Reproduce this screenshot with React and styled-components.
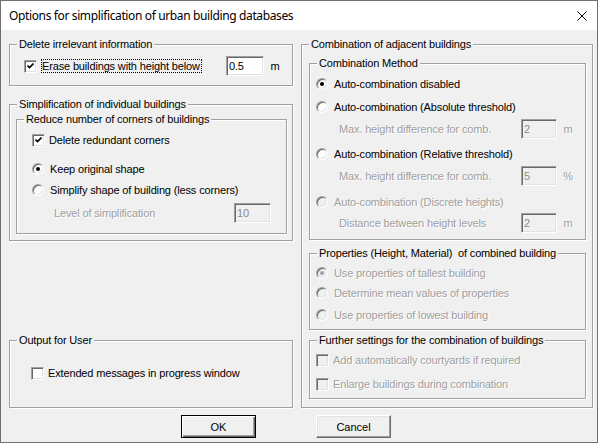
import React from "react";
import styled, { createGlobalStyle, css } from "styled-components";

const GlobalStyle = createGlobalStyle`
  html, body {
    margin: 0;
    padding: 0;
    background: #f0f0f0;
  }
  body {
    font-family: "Liberation Sans", Arial, sans-serif;
    font-size: 11px;
  }
`;

const Window = styled.div`
  width: 598px;
  height: 443px;
  box-sizing: border-box;
  border: 1px solid #6f6f6f;
  background: #f0f0f0;
  display: flex;
  flex-direction: column;
  font-family: "Liberation Sans", Arial, sans-serif;
  font-size: 11px;
  letter-spacing: -0.15px;
  color: #000;
`;

const TitleBar = styled.div`
  flex: none;
  height: 29px;
  background: #fff;
  display: flex;
  align-items: center;
  justify-content: space-between;
  padding: 0 10px 0 8px;
  font-family: "Noto Sans", "Segoe UI", sans-serif;
  font-size: 12px;
  letter-spacing: -0.37px;
`;

const CloseIcon = () => (
  <svg width="10" height="10" viewBox="0 0 10 10">
    <path d="M0.5 0.5 L9.5 9.5 M9.5 0.5 L0.5 9.5" stroke="#000" strokeWidth="1" />
  </svg>
);

const Body = styled.div`
  flex: 1;
  display: flex;
  flex-direction: column;
  padding: 14px 4px 4px 8px;
`;

const Columns = styled.div`
  display: grid;
  grid-template-columns: 284px 292px;
  column-gap: 8px;
  height: 364px;
`;

const Column = styled.div`
  display: flex;
  flex-direction: column;
`;

// etched group box, the caption sits over the top line
const Group = styled.div`
  display: flex;
  flex-direction: column;
  border: 1px solid #a0a0a0;
  box-shadow: inset 1px 1px 0 #fff, 1px 1px 0 #fff;
  margin-top: ${({ $mt }) => $mt || 0}px;
  ${({ $push }) =>
    $push &&
    css`
      margin-top: auto;
    `}
`;

const Legend = styled.div`
  align-self: flex-start;
  margin: -7px 0 0 7px;
  padding: 0 2px;
  height: 13px;
  line-height: 13px;
  background: #f0f0f0;
  white-space: nowrap;
`;

const GroupBody = styled.div`
  display: flex;
  flex-direction: column;
  padding: ${({ $pad }) => $pad};
`;

const Row = styled.div`
  display: flex;
  align-items: center;
  height: 20px;
  margin-top: ${({ $mt }) => $mt || 0}px;
  padding-left: ${({ $indent }) => $indent || 0}px;
  white-space: nowrap;
  color: ${({ $disabled }) => ($disabled ? "#a0a0a0" : "#000")};
  text-shadow: ${({ $disabled }) => ($disabled ? "1px 1px 0 #fff" : "none")};
`;

const Label = styled.span`
  flex: ${({ $grow }) => ($grow ? 1 : "none")};
`;

const FocusLabel = styled.span`
  height: 14px;
  box-sizing: border-box;
  line-height: 12px;
  border: 1px dotted #000;
  padding-right: 1px;
`;

const Spacer = styled.span`
  flex: 1;
`;

const sunken = css`
  box-sizing: border-box;
  border: 1px solid;
  border-color: #a0a0a0 #fff #fff #a0a0a0;
  box-shadow: inset 1px 1px 0 #696969, inset -1px -1px 0 #e3e3e3;
`;

const CheckBox = styled.span`
  ${sunken};
  flex: none;
  width: 13px;
  height: 13px;
  margin-right: 4px;
  display: flex;
  align-items: center;
  justify-content: center;
  background: ${({ $disabled }) => ($disabled ? "#f0f0f0" : "#fff")};
`;

const RadioButton = styled.span`
  ${sunken};
  flex: none;
  width: 12px;
  height: 12px;
  margin-right: 6px;
  border-radius: 50%;
  display: flex;
  align-items: center;
  justify-content: center;
  background: ${({ $disabled }) => ($disabled ? "#f0f0f0" : "#fff")};

  &::after {
    content: "";
    display: ${({ $checked }) => ($checked ? "block" : "none")};
    width: 4px;
    height: 4px;
    border-radius: 50%;
    background: ${({ $disabled }) => ($disabled ? "#a0a0a0" : "#000")};
  }
`;

const Field = styled.div`
  ${sunken};
  flex: none;
  width: ${({ $w }) => $w}px;
  height: 20px;
  padding: 0 2px;
  display: flex;
  align-items: center;
  background: ${({ $disabled }) => ($disabled ? "#f0f0f0" : "#fff")};
  color: ${({ $disabled }) => ($disabled ? "#8c8c8c" : "#000")};
  text-shadow: none;
`;

const Unit = styled.span`
  flex: none;
  width: 22px;
  text-align: center;
`;

const ButtonRow = styled.div`
  display: flex;
  gap: 60px;
  margin-top: 7px;
  padding-left: 172px;
`;

const Button = styled.button`
  width: 75px;
  height: 23px;
  box-sizing: border-box;
  padding: 0;
  font-family: inherit;
  font-size: 11px;
  color: #000;
  background: #f0f0f0;
  border: 1px solid;
  border-color: #fff #696969 #696969 #fff;
  box-shadow: inset -1px -1px 0 #a0a0a0, inset 1px 1px 0 #e3e3e3;

  ${({ $default }) =>
    $default &&
    css`
      border-color: #000;
      box-shadow: inset 1px 1px 0 #fff, inset -1px -1px 0 #696969,
        inset -2px -2px 0 #a0a0a0;
    `}
`;

const Check = ({ checked, disabled }) => (
  <CheckBox $disabled={disabled}>
    {checked && (
      <svg width="7" height="7" viewBox="0 0 7 7">
        <path d="M0.5 2.5 L2.5 4.5 L6.5 0.5" fill="none" stroke="#000" strokeWidth="1.6" />
      </svg>
    )}
  </CheckBox>
);

const Radio = ({ checked, disabled }) => (
  <RadioButton $checked={checked} $disabled={disabled} />
);

const ValueRow = ({ label, value, unit, mt, indent = 23, width = 36, disabled }) => (
  <Row $mt={mt} $indent={indent} $disabled={disabled}>
    <Label $grow>{label}</Label>
    <Field $w={width} $disabled>
      {value}
    </Field>
    {unit !== undefined && <Unit>{unit}</Unit>}
  </Row>
);

export default function App() {
  return (
    <>
      <GlobalStyle />
      <Window>
        <TitleBar>
          <span>Options for simplification of urban building databases</span>
          <CloseIcon />
        </TitleBar>
        <Body>
          <Columns>
            <Column>
              <Group>
                <Legend>Delete irrelevant information</Legend>
                <GroupBody $pad="5px 6px 9px 14px">
                  <Row>
                    <Check checked />
                    <FocusLabel>Erase buildings with height below</FocusLabel>
                    <Spacer />
                    <Field $w={38}>0.5</Field>
                    <Unit>m</Unit>
                  </Row>
                </GroupBody>
              </Group>

              <Group $mt={18}>
                <Legend>Simplification of individual buildings</Legend>
                <GroupBody $pad="8px 5px 6px 6px">
                  <Group>
                    <Legend>Reduce number of corners of buildings</Legend>
                    <GroupBody $pad="4px 15px 10px 15px">
                      <Row>
                        <Check checked />
                        <Label>Delete redundant corners</Label>
                      </Row>
                      <Row $mt={9}>
                        <Radio checked />
                        <Label>Keep original shape</Label>
                      </Row>
                      <Row $mt={1}>
                        <Radio />
                        <Label>Simplify shape of building (less corners)</Label>
                      </Row>
                      <ValueRow
                        mt={3}
                        indent={22}
                        width={37}
                        label="Level of simplification"
                        value="10"
                        disabled
                      />
                    </GroupBody>
                  </Group>
                </GroupBody>
              </Group>

              <Group $push>
                <Legend>Output for User</Legend>
                <GroupBody $pad="16px 6px 24px 21px">
                  <Row>
                    <Check />
                    <Label>Extended messages in progress window</Label>
                  </Row>
                </GroupBody>
              </Group>
            </Column>

            <Column>
              <Group>
                <Legend>Combination of adjacent buildings</Legend>
                <GroupBody $pad="12px 6px 8px 7px">
                  <Group>
                    <Legend>Combination Method</Legend>
                    <GroupBody $pad="4px 6px 6px 6px">
                      <Row>
                        <Radio checked />
                        <Label>Auto-combination disabled</Label>
                      </Row>
                      <Row $mt={3}>
                        <Radio />
                        <Label>Auto-combination (Absolute threshold)</Label>
                      </Row>
                      <ValueRow mt={2} label="Max. height difference for comb." value="2" unit="m" disabled />
                      <Row $mt={5}>
                        <Radio />
                        <Label>Auto-combination (Relative threshold)</Label>
                      </Row>
                      <ValueRow mt={2} label="Max. height difference for comb." value="5" unit="%" disabled />
                      <Row $mt={6} $disabled>
                        <Radio disabled />
                        <Label>Auto-combination (Discrete heights)</Label>
                      </Row>
                      <ValueRow mt={1} label="Distance between height levels" value="2" unit="m" disabled />
                    </GroupBody>
                  </Group>

                  <Group $mt={13}>
                    <Legend>Properties (Height, Material)&nbsp; of combined building</Legend>
                    <GroupBody $pad="3px 6px 4px 6px">
                      <Row $disabled>
                        <Radio checked disabled />
                        <Label>Use properties of tallest building</Label>
                      </Row>
                      <Row $disabled>
                        <Radio disabled />
                        <Label>Determine mean values of properties</Label>
                      </Row>
                      <Row $mt={2} $disabled>
                        <Radio disabled />
                        <Label>Use properties of lowest building</Label>
                      </Row>
                    </GroupBody>
                  </Group>

                  <Group $mt={10}>
                    <Legend>Further settings for the combination of buildings</Legend>
                    <GroupBody $pad="3px 6px 4px 6px">
                      <Row $disabled>
                        <Check disabled />
                        <Label>Add automatically courtyards if required</Label>
                      </Row>
                      <Row $mt={4} $disabled>
                        <Check disabled />
                        <Label>Enlarge buildings during combination</Label>
                      </Row>
                    </GroupBody>
                  </Group>
                </GroupBody>
              </Group>
            </Column>
          </Columns>

          <ButtonRow>
            <Button $default>OK</Button>
            <Button>Cancel</Button>
          </ButtonRow>
        </Body>
      </Window>
    </>
  );
}
